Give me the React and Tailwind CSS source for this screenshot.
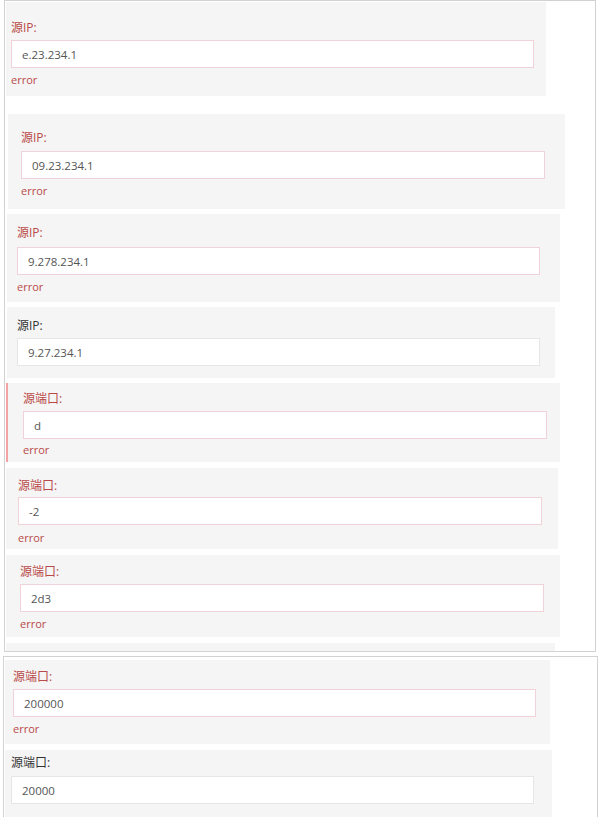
import React from 'react';

const ERR_LABEL = 'text-[#b94a48]';
const OK_LABEL = 'text-[#333333]';

// each row of the test page: wrapper spacing + inner field
const topRows = [
  { box: 'ml-[1px] mt-[1px] w-[540px] h-[94px] pl-[5px] pt-[18px]', gap: 'mb-[4px]', input: 'w-[523px]', label: '源IP:', value: 'e.23.234.1', error: true, errGap: 'mt-[4px]' },
  { box: 'ml-[3px] mt-[18px] w-[557px] h-[95px] pl-[13px] pt-[16px]', gap: 'mb-[5px]', input: 'w-[524px]', label: '源IP:', value: '09.23.234.1', error: true, errGap: 'mt-[4px]' },
  { box: 'ml-[2px] mt-[5px] w-[553px] h-[88px] pl-[10px] pt-[11px]', gap: 'mb-[6px]', input: 'w-[523px]', label: '源IP:', value: '9.278.234.1', error: true, errGap: 'mt-[4px]' },
  { box: 'ml-[2px] mt-[5px] w-[548px] h-[71px] pl-[10px] pt-[11px]', gap: 'mb-[4px]', input: 'w-[523px]', label: '源IP:', value: '9.27.234.1', error: false },
  { box: 'ml-[1px] mt-[5px] w-[554px] h-[79px] pl-[15px] pt-[8px] border-l-2 border-[#f3a3a3]', gap: 'mb-[4px]', input: 'w-[524px]', label: '源端口:', value: 'd', error: true, errGap: 'mt-[3px]' },
  { box: 'ml-[1px] mt-[6px] w-[552px] h-[81px] pl-[12px] pt-[10px]', gap: 'mb-[3px]', input: 'w-[524px]', label: '源端口:', value: '-2', error: true, errGap: 'mt-[5px]' },
  { box: 'ml-[1px] mt-[6px] w-[554px] h-[82px] pl-[14px] pt-[9px]', gap: 'mb-[4px]', input: 'w-[524px]', label: '源端口:', value: '2d3', error: true, errGap: 'mt-[4px]' },
];

const bottomRows = [
  { box: 'ml-[1px] mt-[3px] w-[545px] h-[84px] pl-[8px] pt-[9px]', gap: 'mb-[4px]', input: 'w-[523px]', label: '源端口:', value: '200000', error: true, errGap: 'mt-[4px]' },
  { box: 'ml-[1px] mt-[6px] w-[547px] h-[80px] pl-[6px] pt-[5px]', gap: 'mb-[5px]', input: 'w-[523px]', label: '源端口:', value: '20000', error: false },
];

const Field = ({ row }) => (
  <div className={`bg-[#f5f5f5] shrink-0 ${row.box}`}>
    <div className={`text-[12px] leading-4 ${row.error ? ERR_LABEL : OK_LABEL} ${row.gap}`}>
      {row.label}
    </div>
    <input
      readOnly
      value={row.value}
      className={`block h-[28px] px-[10px] bg-white text-[11.5px] text-[#555555] outline-none border ${
        row.error ? 'border-[#f0d2d8]' : 'border-[#e6e6e6]'
      } ${row.input}`}
    />
    {row.error && (
      <div className={`text-[11px] leading-4 text-[#b94a48] ${row.errGap}`}>error</div>
    )}
  </div>
);

const App = () => {
  return (
    <div
      className="w-[600px] h-[817px] overflow-hidden bg-white"
      style={{ fontFamily: '"Open Sans", "Noto Sans CJK SC", sans-serif' }}
    >
      {/* first frame */}
      <div className="ml-[4px] w-[592px] h-[652px] border border-[#d2d2d2] overflow-hidden flex flex-col">
        {topRows.map((row, i) => (
          <Field key={i} row={row} />
        ))}
        <div className="ml-[1px] mt-[6px] w-[549px] h-[40px] bg-[#f5f5f5] shrink-0" />
      </div>

      {/* second frame */}
      <div className="ml-[3px] mt-[4px] w-[595px] h-[200px] border border-[#d2d2d2] border-b-0 flex flex-col">
        {bottomRows.map((row, i) => (
          <Field key={i} row={row} />
        ))}
      </div>
    </div>
  );
};

export default App;
